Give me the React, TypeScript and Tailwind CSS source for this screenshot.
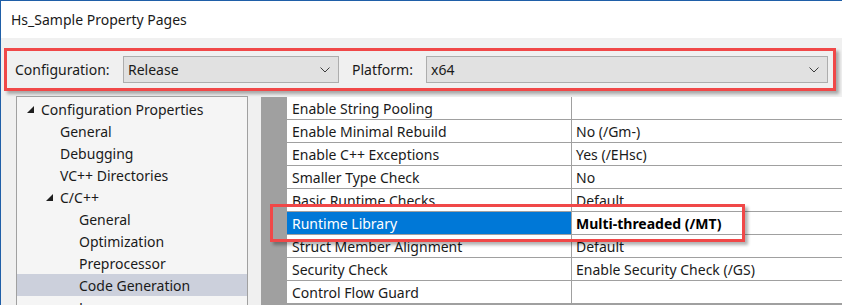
import React from "react";

const tree: { label: string; indent: number; expander?: boolean; selected?: boolean }[] = [
  { label: "Configuration Properties", indent: 41, expander: true },
  { label: "General", indent: 60 },
  { label: "Debugging", indent: 60 },
  { label: "VC++ Directories", indent: 60 },
  { label: "C/C++", indent: 60, expander: true },
  { label: "General", indent: 79 },
  { label: "Optimization", indent: 79 },
  { label: "Preprocessor", indent: 79 },
  { label: "Code Generation", indent: 79, selected: true },
  { label: "Language", indent: 79 },
];

const props: { name: string; value: string; selected?: boolean }[] = [
  { name: "Enable String Pooling", value: "" },
  { name: "Enable Minimal Rebuild", value: "No (/Gm-)" },
  { name: "Enable C++ Exceptions", value: "Yes (/EHsc)" },
  { name: "Smaller Type Check", value: "No" },
  { name: "Basic Runtime Checks", value: "Default" },
  { name: "Runtime Library", value: "Multi-threaded (/MT)", selected: true },
  { name: "Struct Member Alignment", value: "Default" },
  { name: "Security Check", value: "Enable Security Check (/GS)" },
  { name: "Control Flow Guard", value: "" },
];

function Chevron() {
  return (
    <svg width="10" height="6" viewBox="0 0 10 6" className="shrink-0">
      <path d="M0.5 0.5 L5 5 L9.5 0.5" fill="none" stroke="#3c3c3c" strokeWidth="1" />
    </svg>
  );
}

function Expander() {
  return (
    <svg width="7" height="7" viewBox="0 0 7 7" className="shrink-0">
      <polygon points="7,0 7,7 0,7" fill="#1e1e1e" />
    </svg>
  );
}

function Combo({ value, width }: { value: string; width: string }) {
  return (
    <div
      className={`${width} h-[27px] flex items-center justify-between border border-[#adadad] bg-[#e1e1e1] pl-[4px] pr-[8px]`}
    >
      <span>{value}</span>
      <Chevron />
    </div>
  );
}

export default function App() {
  return (
    <div
      className="w-[842px] h-[305px] overflow-hidden border-l border-t border-[#1f5fa8] bg-[#f0f0f0] text-[14px] text-[#1a1a1a]"
      style={{ fontFamily: '"Noto Sans", "Open Sans", sans-serif' }}
    >
      <div className="h-[37px] bg-white flex items-center pl-[10px] text-[14px]">Hs_Sample Property Pages</div>

      <div className="pt-[10px]">
        {/* configuration bar */}
        <div className="ml-[3px] w-[832px] h-[43px] border-[3px] border-[#f04848] shadow-[3px_3px_3px_rgba(0,0,0,0.3)] flex items-center pl-[8px]">
          <span className="w-[108px]">Configuration:</span>
          <Combo value="Release" width="w-[216px]" />
          <span className="ml-[13px] w-[74px]">Platform:</span>
          <Combo value="x64" width="w-[402px]" />
        </div>

        <div className="mt-[5px] flex">
          {/* tree */}
          <div className="ml-[15px] w-[232px] h-[220px] border border-[#a0a0a0] border-b-0 bg-[#f5f5f5] pt-[1px]">
            {tree.map((t, i) => (
              <div
                key={i}
                className={`h-[22px] flex items-center ${t.selected ? "bg-[#ccd0dc]" : ""}`}
              >
                {t.expander ? (
                  <span className="flex items-center" style={{ paddingLeft: t.indent - 31 }}>
                    <Expander />
                    <span className="ml-[7px]">{t.label}</span>
                  </span>
                ) : (
                  <span style={{ paddingLeft: t.indent - 17 }}>{t.label}</span>
                )}
              </div>
            ))}
          </div>

          {/* property grid */}
          <div className="relative ml-[13px] mt-[1px] flex-1 h-[220px] bg-[#a0a0a0] pl-[26px]">
            <div className="bg-white">
              {props.map((p, i) => (
                <div key={i} className="h-[23px] flex border-b border-[#a0a0a0]">
                  <div
                    className={`w-[285px] border-r border-[#a0a0a0] pl-[5px] flex items-center ${
                      p.selected ? "bg-[#0078d7] text-white" : ""
                    }`}
                  >
                    {p.name}
                  </div>
                  <div className={`flex-1 pl-[4px] flex items-center ${p.selected ? "font-bold text-black" : ""}`}>
                    {p.value}
                  </div>
                </div>
              ))}
            </div>
            <div className="absolute left-[9px] top-[107px] w-[475px] h-[38px] border-[3px] border-[#f04848] shadow-[3px_3px_3px_rgba(0,0,0,0.3)]" />
          </div>
        </div>
      </div>
    </div>
  );
}
